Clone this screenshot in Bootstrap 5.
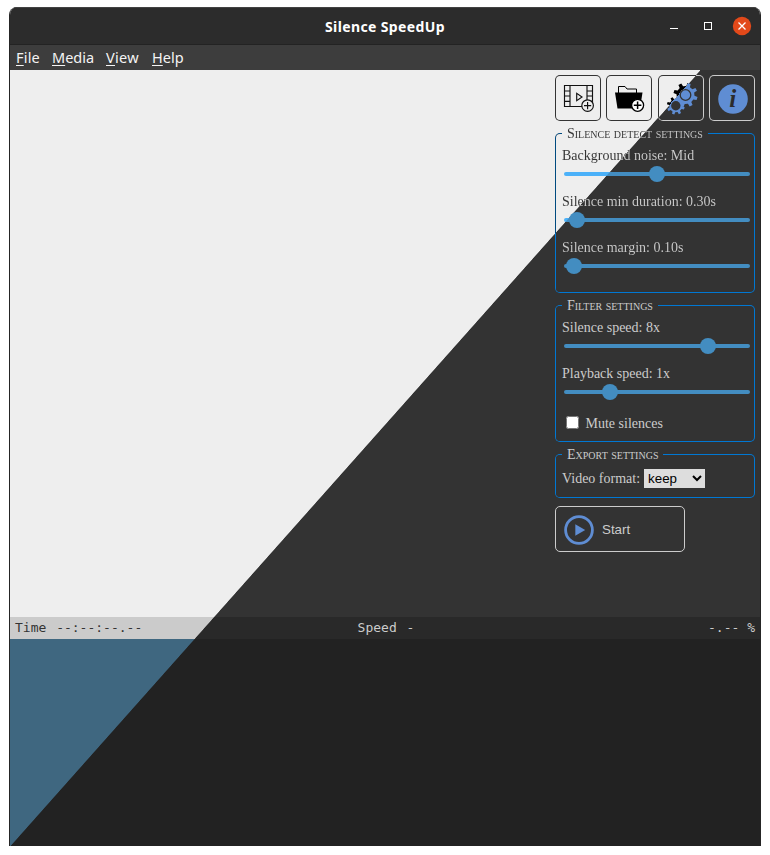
<!DOCTYPE html>
<html lang="en">
<head>
<meta charset="utf-8">
<meta name="viewport" content="width=device-width, initial-scale=1">
<title>Silence SpeedUp</title>
<link href="https://cdn.jsdelivr.net/npm/bootstrap@5.3.0/dist/css/bootstrap.min.css" rel="stylesheet">
<style>
body{background:#fff;padding:7px 9px 9px;height:855px;overflow:hidden}
.app-window{height:839px;width:752px;border:1px solid #252525;border-top:0;border-bottom:0;border-radius:8px 8px 0 0;overflow:hidden;font-family:"Liberation Serif",serif;font-size:14px;line-height:16px}
.title-bar{height:38px;background:#2c2c2c;border-top:1px solid #424242;border-bottom:1px solid #232323;color:#fff;font:bold 14px "Noto Sans",sans-serif;display:grid;grid-template-columns:1fr auto 1fr}
.title-bar .caption{letter-spacing:.38px}
.menu-bar{height:25px;background:#3d3d3d;color:#f4f4f4;font:14.5px/25px "Noto Sans",sans-serif;padding-left:6px}
.menu-bar u{text-underline-offset:2px}
.menu-bar span{white-space:nowrap}
.m-file{width:36px;letter-spacing:.2px}.m-media{width:54px}.m-view{width:46px;letter-spacing:.3px}.m-help{width:34px}

/* Light theme above the diagonal, dark theme below it */
.split-fill,.split-text,.split-box{--light:#eee;--dark:#333}
.split-fill{background:linear-gradient(to bottom right,var(--light) 50%,var(--dark) 50.08%) 10px 70px/690px 776px no-repeat fixed var(--dark)}
.split-text{--light:#333;--dark:#ccc;background:linear-gradient(to bottom right,var(--light) 50%,var(--dark) 50.08%) 10px 70px/690px 776px no-repeat fixed var(--dark);-webkit-background-clip:text;background-clip:text;color:transparent}
.split-box{--edge-light:#004a80;--edge-dark:#0078d4;border:1px solid transparent;border-radius:5px;
background:linear-gradient(to bottom right,#eee 50%,#333 50.08%) 10px 70px/690px 776px no-repeat fixed padding-box,
linear-gradient(#333,#333) padding-box,
linear-gradient(to bottom right,var(--edge-light) 50%,var(--edge-dark) 50.08%) 10px 70px/690px 776px no-repeat fixed border-box,
linear-gradient(var(--edge-dark),var(--edge-dark)) border-box}
.tool{--edge-light:#333;--edge-dark:#ccc;width:46px;height:46px;padding:0;line-height:0}
.tool svg{display:block;width:44px;height:44px}
.player{height:547px}
.status{--light:#cbcbcb;--dark:#292929;height:22px;font:13px/22px "DejaVu Sans Mono",monospace;color:#ccc;padding:0 5px;display:grid;grid-template-columns:1fr auto 1fr}
.status .time{color:#333}
.status .time,.status .speed{word-spacing:2px}
.status .speed{padding-left:2px}
.timeline{--light:#3f6780;--dark:#222;height:207px}
.side{width:205px;padding:5px 5px 0 0}
.group{padding:0 5px 0 6px;width:200px}
.group-title{font-variant:small-caps;height:16px;margin-top:-8px;width:max-content;padding:0 5px;line-height:16px}
.g-detect{height:160px;margin-top:12px}
.g-filter{height:137px;margin-top:12px}
.g-export{height:44px;margin-top:12px}
.setting{height:46px;padding-top:6px}
.setting .split-text{display:block;width:max-content}
.slider{height:16px;margin:2px -1px 0 2px;display:flex;align-items:center}
.rail{--light:#4bb1f9;--dark:#438dc1;height:4px;width:186px;border-radius:2px;display:flex;align-items:center}
.thumb{width:16px;height:16px;border-radius:50%;background:#438dc1;flex:none}
.lit{color:#ccc}
.opt-mute{padding-top:10px}
.opt-format{padding-top:6px}
.group input{width:13px;height:13px;margin:0 6.5px 3px 4px}
.group select{width:61px;height:19px;border:0;border-radius:0;background:#ddd;color:#000;font:13.33px "Liberation Sans",sans-serif;padding:0}
.start{width:130px;height:46px;margin-top:8px;border:1px solid #ccc;border-radius:5px;background:#333;color:#ccc;font:13.33px "Liberation Sans",sans-serif;padding:0}
.start svg{width:44px;height:44px;margin-right:2px}
</style>
<script src="https://cdn.jsdelivr.net/npm/bootstrap@5.3.0/dist/js/bootstrap.bundle.min.js"></script>
</head>
<body>
<div class="app-window">
  <header class="title-bar align-items-center">
    <span></span><span class="caption">Silence SpeedUp</span>
    <svg class="ms-auto" width="100" height="36" viewBox="0 0 100 36" fill="none" stroke="#fff">
      <path d="M10 20.500h8"/><rect x="44.500" y="14.500" width="7" height="7"/>
      <circle cx="82" cy="18" r="9.200" fill="#e2491a" stroke="none"/><path d="M78.500 14.500l7 7m0-7l-7 7" stroke-width="1.300"/>
    </svg>
  </header>
  <nav class="menu-bar d-flex">
    <span class="m-file"><u>F</u>ile</span><span class="m-media"><u>M</u>edia</span><span class="m-view"><u>V</u>iew</span><span class="m-help"><u>H</u>elp</span>
  </nav>
  <main class="player split-fill d-flex justify-content-end">
    <aside class="side">
      <div class="d-flex justify-content-between">
        <button class="tool split-box" aria-label="Add video"><svg viewBox="0 0 44 44" fill="none" stroke="#111" stroke-width="1.150">
          <path d="M8.500 9.500h28v21h-28zM14 9.500v21M31 9.500v21M8.500 15h5.500M8.500 20h5.500M8.500 25.300h5.500M31 15h5.500M31 20h5.500M31 25.300h5.500"/><path d="M20.700 17.300v7.400l5.300-3.700z"/>
          <circle cx="31.600" cy="29.600" r="5.800" fill="#eee"/><path d="M31.600 26v7.200M28 29.600h7.200"/></svg></button>
        <button class="tool split-box" aria-label="Add folder"><svg viewBox="0 0 44 44" fill="none" stroke="#000" stroke-width="1">
          <path d="M11.500 18v-7.500h6.500l2 2.500h9.500v5"/><path d="M8 16.500h27.500l-2.500 16h-22.500z" fill="#000" stroke="none"/>
          <circle cx="30.600" cy="29.300" r="6" fill="#fff" stroke-width="1.300"/><path d="M30.600 25.500v7.600M26.800 29.300h7.600" stroke-width="1.500"/></svg></button>
        <button class="tool split-box" aria-label="Settings"><svg viewBox="0 0 44 44">
          <defs>
            <linearGradient id="ink" gradientUnits="userSpaceOnUse" x1="26" y1="-8.890" x2="46" y2="8.890"><stop offset=".5" stop-color="#000"/><stop offset=".5" stop-color="#5f8dd3"/></linearGradient>
            <linearGradient id="paper" gradientUnits="userSpaceOnUse" x1="26" y1="-8.890" x2="46" y2="8.890"><stop offset=".5" stop-color="#eee"/><stop offset=".5" stop-color="#333"/></linearGradient>
          </defs>
          <g id="gears"></g></svg></button>
        <button class="tool split-box" aria-label="About"><svg viewBox="0 0 44 44"><circle cx="23" cy="23" r="14.800" fill="#5f8dd3"/><text x="22.800" y="31.300" text-anchor="middle" font-family="Liberation Serif,serif" font-size="25" font-weight="bold" font-style="italic" fill="#2b2b2b">i</text></svg></button>
      </div>

      <section class="group split-box g-detect">
        <div class="group-title split-fill"><span class="split-text">Silence detect settings</span></div>
        <div class="setting"><span class="split-text">Background noise: Mid</span><div class="slider"><div class="rail split-fill"><i class="thumb" style="margin-left:85px"></i></div></div></div>
        <div class="setting"><span class="split-text">Silence min duration: 0.30s</span><div class="slider"><div class="rail split-fill"><i class="thumb" style="margin-left:5px"></i></div></div></div>
        <div class="setting"><span class="split-text">Silence margin: 0.10s</span><div class="slider"><div class="rail split-fill"><i class="thumb" style="margin-left:2px"></i></div></div></div>
      </section>

      <section class="group split-box g-filter lit">
        <div class="group-title split-fill">Filter settings</div>
        <div class="setting">Silence speed: 8x<div class="slider"><div class="rail split-fill"><i class="thumb" style="margin-left:136px"></i></div></div></div>
        <div class="setting">Playback speed: 1x<div class="slider"><div class="rail split-fill"><i class="thumb" style="margin-left:38px"></i></div></div></div>
        <label class="d-flex align-items-center opt-mute"><input type="checkbox">Mute silences</label>
      </section>

      <section class="group split-box g-export lit">
        <div class="group-title split-fill">Export settings</div>
        <label class="d-flex align-items-center gap-1 opt-format">Video format: <select><option>keep</option></select></label>
      </section>

      <button class="start d-flex align-items-center"><svg viewBox="0 0 44 44"><circle cx="23" cy="23" r="13.400" fill="none" stroke="#5f8dd3" stroke-width="2.800"/><path d="M19.300 17.300v11.400l9.900-5.700z" fill="#5f8dd3"/></svg>Start</button>
    </aside>
  </main>
  <div class="status split-fill">
    <span class="time">Time --:--:--.--</span><span class="speed">Speed -</span><span class="text-end">-.-- %</span>
  </div>
  <div class="timeline split-fill"></div>
</div>
<script>
// Outline of a cog with n trapezoid teeth
function cog(cx, cy, n, rOut, rIn, turn) {
  var d = '', step = 2 * Math.PI / n;
  for (var k = 0; k < n; k++) {
    [[-.27, rIn], [-.17, rOut], [.17, rOut], [.27, rIn]].forEach(function (p) {
      var a = turn + (k + p[0]) * step;
      d += (d ? 'L' : 'M') + (cx + p[1] * Math.cos(a)).toFixed(2) + ' ' + (cy + p[1] * Math.sin(a)).toFixed(2);
    });
  }
  return '<path fill="url(#ink)" d="' + d + 'z"/>';
}
document.getElementById('gears').innerHTML =
  cog(26.5, 19, 8, 12.2, 9, .3) +
  '<circle cx="26.5" cy="19" r="5.3" fill="url(#ink)" stroke="url(#paper)" stroke-width="1.3"/>' +
  cog(16.8, 29.7, 8, 9, 6.6, .3) +
  '<circle cx="16.8" cy="29.7" r="4.7" fill="url(#paper)"/>';
</script>
</body>
</html>
